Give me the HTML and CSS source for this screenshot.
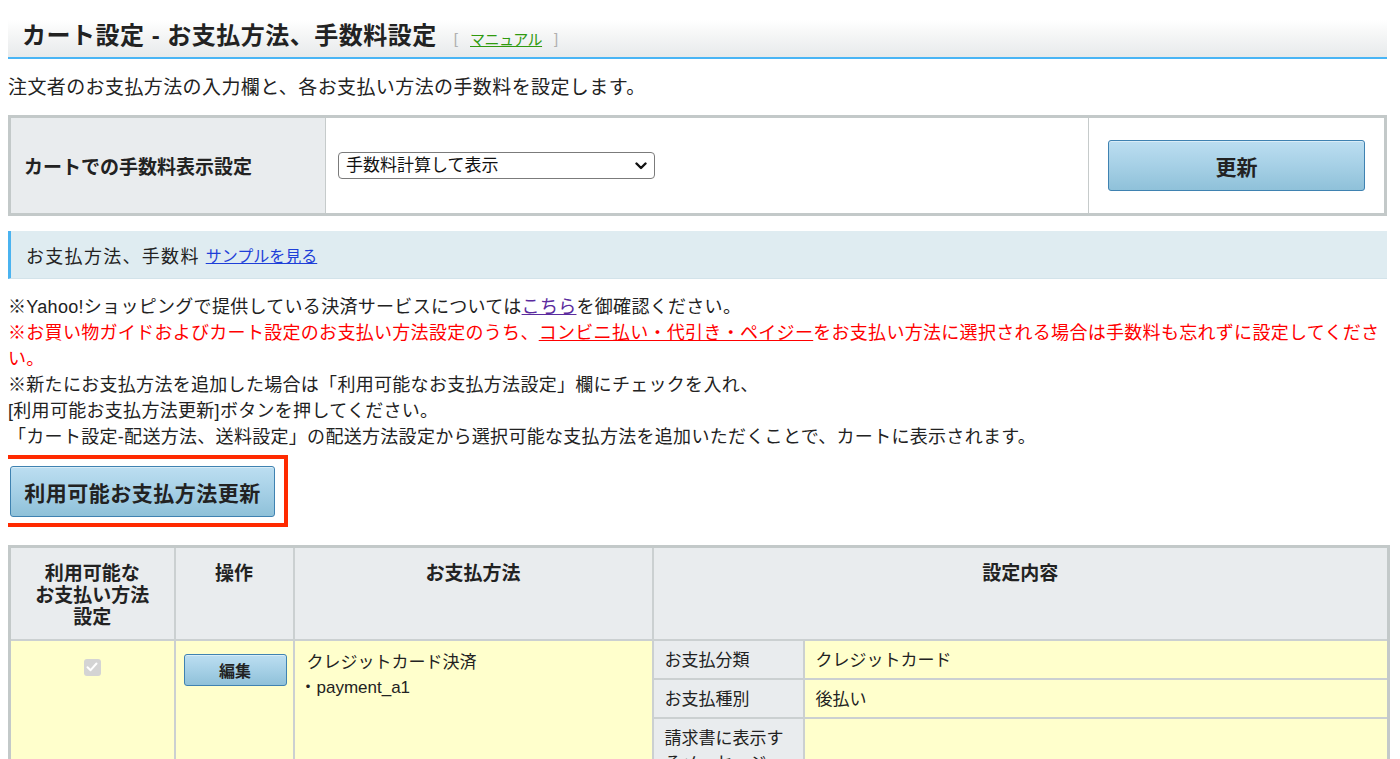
FILE: index.html
```html
<!DOCTYPE html>
<html lang="ja">
<head>
<meta charset="utf-8">
<title>カート設定 - お支払方法、手数料設定</title>
<link rel="stylesheet" href="styles.css">
</head>
<body>
<div class="page">
  <div class="page-header">
    <h1 class="page-title">カート設定 - お支払方法、手数料設定</h1>
    <span class="manual"><span class="bracket">[</span><a href="#" class="manual-link">マニュアル</a><span class="bracket">]</span></span>
  </div>

  <p class="lead">注文者のお支払方法の入力欄と、各お支払い方法の手数料を設定します。</p>

  <table class="setting-table">
    <tr>
      <th class="st-label">カートでの手数料表示設定</th>
      <td class="st-select">
        <div class="select-wrap">
          <select class="fee-select">
            <option>手数料計算して表示</option>
          </select>
          <svg class="select-arrow" width="12" height="8" viewBox="0 0 12 8"><path d="M1.5 1.5 L6 6 L10.5 1.5" fill="none" stroke="#111" stroke-width="2.4" stroke-linecap="round" stroke-linejoin="round"/></svg>
        </div>
      </td>
      <td class="st-action"><button class="btn btn-update">更新</button></td>
    </tr>
  </table>

  <div class="section-bar">
    <span class="section-title">お支払方法、手数料</span>
    <a href="#" class="sample-link">サンプルを見る</a>
  </div>

  <div class="notes">
    <p>※Yahoo!ショッピングで提供している決済サービスについては<a href="#" class="visited-link">こちら</a>を御確認ください。</p>
    <p class="warn">※お買い物ガイドおよびカート設定のお支払い方法設定のうち、<a href="#" class="warn-link">コンビニ払い・代引き・ペイジー</a>をお支払い方法に選択される場合は手数料も忘れずに設定してください。</p>
    <p>※新たにお支払方法を追加した場合は「利用可能なお支払方法設定」欄にチェックを入れ、<br>[利用可能お支払方法更新]ボタンを押してください。</p>
    <p>「カート設定-配送方法、送料設定」の配送方法設定から選択可能な支払方法を追加いただくことで、カートに表示されます。</p>
  </div>

  <div class="highlight">
    <button class="btn btn-bulk">利用可能お支払方法更新</button>
  </div>

  <table class="pay-table">
    <colgroup>
      <col class="c-use">
      <col class="c-op">
      <col class="c-method">
      <col class="c-detail">
    </colgroup>
    <thead>
      <tr>
        <th>利用可能な<br>お支払い方法<br>設定</th>
        <th>操作</th>
        <th>お支払方法</th>
        <th>設定内容</th>
      </tr>
    </thead>
    <tbody>
      <tr class="row-yellow">
        <td class="cell-check"><span class="fake-check"><svg width="12" height="10" viewBox="0 0 12 10"><path d="M1.5 5.2 L4.6 8.2 L10.5 1.5" fill="none" stroke="#fff" stroke-width="2" stroke-linecap="round" stroke-linejoin="round"/></svg></span></td>
        <td class="cell-op"><button class="btn btn-edit">編集</button></td>
        <td class="cell-method">クレジットカード決済<br><span class="dot">・</span>payment_a1</td>
        <td class="cell-detail">
          <table class="detail-table">
            <tr class="d-r1"><th>お支払分類</th><td>クレジットカード</td></tr>
            <tr class="d-r2"><th>お支払種別</th><td>後払い</td></tr>
            <tr class="d-r3"><th>請求書に表示するメッセージ</th><td></td></tr>
          </table>
        </td>
      </tr>
    </tbody>
  </table>
</div>
</body>
</html>
```

FILE: styles.css
```css
html, body {
  background: #ffffff;
}
body {
  margin: 8px;
  color: #222222;
  font-family: "Liberation Sans", "Noto Sans CJK JP", "Noto Sans", sans-serif;
}
.page {
  width: 1379px;
}

/* header */
.page-header {
  margin-top: 12px;
  height: 37px;
  border-bottom: 2px solid #49b5f5;
  background: linear-gradient(to bottom, #ffffff 0%, #f5f6f6 40%, #e7eaeb 100%);
  display: flex;
  align-items: center;
  padding-left: 14px;
  box-sizing: content-box;
}
.page-title {
  margin: 0 0 6px 0;
  font-size: 24px;
  line-height: 30px;
  font-weight: bold;
  letter-spacing: 0.5px;
  color: #222;
}
.manual {
  margin-left: 17px;
  font-size: 15px;
  display: flex;
  align-items: center;
  gap: 12px;
  margin-top: 0;
}
.bracket {
  color: #b0b0b0;
  font-size: 15px;
}
.manual-link {
  color: #2f9a0f;
  text-decoration: underline;
  letter-spacing: -0.5px;
}

/* lead */
.lead {
  margin: 17px 0 0 0;
  font-size: 19px;
  line-height: 24px;
  letter-spacing: 0.4px;
}

/* top setting table */
.setting-table {
  margin-top: 15px;
  width: 1379px;
  border-collapse: collapse;
  border: 3px solid #c3c9c9;
  table-layout: fixed;
}
.setting-table th,
.setting-table td {
  height: 95px;
  padding: 0;
  border: 1px solid #c6cbcb;
  vertical-align: middle;
}
.st-label {
  width: 301px;
  background: #e9ecee;
  text-align: left;
  padding-left: 13px !important;
  font-size: 19px;
  font-weight: bold;
  color: #222;
}
.st-select {
  width: 762px;
  background: #fff;
}
.st-action {
  background: #fff;
  text-align: center;
}
.select-wrap {
  position: relative;
  width: 317px;
  margin-left: 12px;
}
.fee-select {
  appearance: none;
  -webkit-appearance: none;
  display: block;
  width: 317px;
  height: 27px;
  border: 1px solid #7b7b7b;
  border-radius: 4px;
  background: #fff;
  font-family: "Liberation Sans", "Noto Sans CJK JP", sans-serif;
  font-size: 17px;
  color: #111;
  padding: 0 0 0 7px;
}
.select-arrow {
  position: absolute;
  right: 8px;
  top: 10px;
  pointer-events: none;
}

/* buttons */
.btn {
  font-family: "Liberation Sans", "Noto Sans CJK JP", sans-serif;
  font-weight: bold;
  color: #222;
  border: 1px solid #3f82b1;
  border-radius: 3px;
  background: linear-gradient(to bottom, #bcdef1 0%, #a6d0e6 50%, #8fc1d9 100%);
  box-shadow: inset 0 1px 0 rgba(255,255,255,0.45);
  cursor: pointer;
  padding: 0;
}
.btn-update {
  width: 257px;
  height: 51px;
  font-size: 21px;
}
.btn-bulk {
  display: block;
  width: 265px;
  height: 51px;
  font-size: 21px;
  letter-spacing: 0.5px;
}
.btn-edit {
  width: 103px;
  height: 32px;
  font-size: 16px;
}

/* section bar */
.section-bar {
  margin-top: 15px;
  height: 48px;
  background: #dfecf1;
  border-left: 3px solid #4ab3f0;
  border-bottom: 1px solid #d3e3ea;
  box-sizing: border-box;
  display: flex;
  align-items: center;
  padding-left: 15px;
  gap: 6px;
}
.section-title {
  font-size: 18px;
  letter-spacing: 1.3px;
  color: #222;
}
.sample-link {
  font-size: 16px;
  color: #1e3fd8;
  text-decoration: underline;
}

/* notes */
.notes {
  margin-top: 15px;
  font-size: 18px;
  line-height: 26px;
  letter-spacing: 0.3px;
}
.notes p {
  margin: 0;
}
.visited-link {
  color: #5b2b9e;
  text-decoration: underline;
}
.warn {
  color: #ff0000;
}
.warn-link {
  color: #ff0000;
  text-decoration: underline;
}

/* highlight annotation */
.highlight {
  margin-top: 5px;
  margin-left: -4px;
  display: inline-block;
  border: 4px solid #ff2a00;
  padding: 7px 9px 6px 2px;
}

/* pay table */
.pay-table {
  margin-top: 18px;
  width: 1379px;
  border-collapse: collapse;
  table-layout: fixed;
  border: 3px solid #c3c9c9;
}
.c-use { width: 165px; }
.c-op { width: 119px; }
.c-method { width: 359px; }
.c-detail { width: 736px; }
.pay-table > thead > tr > th {
  background: #e9ecee;
  border: 2px solid #cbd0d1;
  font-size: 19px;
  line-height: 22px;
  font-weight: bold;
  color: #222;
  vertical-align: top;
  text-align: center;
  padding: 15px 4px 0 4px;
  height: 76px;
}
.row-yellow > td {
  background: #ffffcc;
  border: 2px solid #cbd0d1;
  vertical-align: top;
  font-size: 17px;
  line-height: 25px;
}
.cell-check {
  text-align: center;
  padding: 13px 0 0 0;
}
.fake-check {
  display: inline-flex;
  align-items: center;
  justify-content: center;
  width: 17px;
  height: 17px;
  border-radius: 3px;
  background: #d4d4d4;
}
.cell-op {
  padding: 13px 0 0 8px;
}
.cell-method {
  padding: 9px 12px 0 12px;
}
.dot {
  margin-left: -7px;
}
.cell-detail {
  padding: 0 !important;
}
.detail-table {
  width: 100%;
  border-collapse: collapse;
  border-style: hidden;
  table-layout: fixed;
}
.detail-table th,
.detail-table td {
  border: 2px solid #cbd0d1;
  font-size: 17px;
  line-height: 25px;
  text-align: left;
  vertical-align: top;
  padding: 7px 12px 5px 11px;
  font-weight: normal;
  color: #222;
}
.detail-table th {
  width: 126px;
  background: #e9ecee;
}
.detail-table td {
  background: #ffffcc;
}
.d-r3 th,
.d-r3 td {
  height: 60px;
}
```
